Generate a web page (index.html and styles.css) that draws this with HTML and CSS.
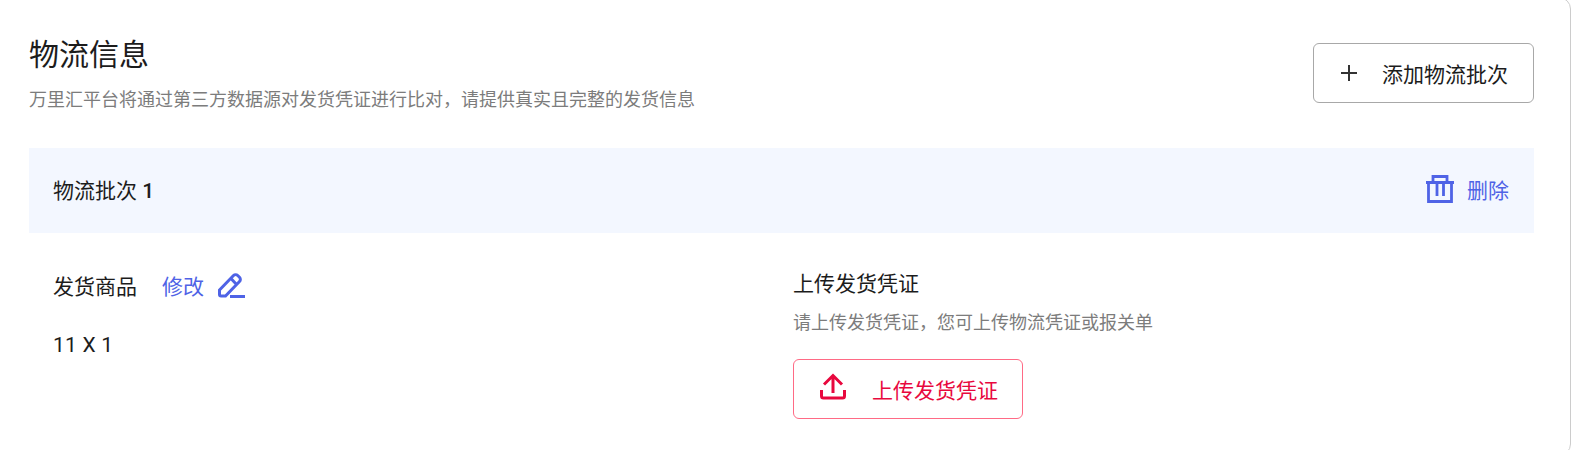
FILE: index.html
```html
<!DOCTYPE html>
<html lang="zh-CN">
<head>
<meta charset="utf-8">
<title>物流信息</title>
<link rel="stylesheet" href="styles.css">
</head>
<body>
<section class="card">
  <header class="head">
    <div>
      <h1 class="title">物流信息</h1>
      <p class="sub">万里汇平台将通过第三方数据源对发货凭证进行比对，请提供真实且完整的发货信息</p>
    </div>
    <button class="btn add">
      <svg class="ico-plus" viewBox="0 0 18 18"><path d="M9 1v16M1 9h16" fill="none" stroke="#333" stroke-width="2"/></svg>
      <span>添加物流批次</span>
    </button>
  </header>
  <div class="batch-bar">
    <span class="batch-name">物流批次 <span class="num">1</span></span>
    <span class="link del">
      <svg class="ico-trash" viewBox="0 0 28 28"><path d="M0 7.500h28M7 7V1.500h14V7M2.500 8v18.500h23V8M11 8v13M17.500 8v13" fill="none" stroke="#4f63e6" stroke-width="2.800"/></svg>
      <span>删除</span>
    </span>
  </div>
  <div class="body">
    <div class="col-l">
      <div class="goods-head">
        <span>发货商品</span>
        <span class="link edit">修改
          <svg class="ico-pen" viewBox="0 0 28 26"><path d="M2.500 18 16.500 3.500a3 3 0 0 1 4.200 0l1.800 1.800a3 3 0 0 1 0 4.200L8.500 24H4A1.500 1.500 0 0 1 2.500 22.500ZM14 6.500l6 6.500M13 24.500h15" fill="none" stroke="#4f63e6" stroke-width="3"/></svg>
        </span>
      </div>
      <div class="goods">11 X 1</div>
    </div>
    <div class="col-r">
      <div class="up-title">上传发货凭证</div>
      <div class="up-sub">请上传发货凭证，您可上传物流凭证或报关单</div>
      <button class="btn upload">
        <svg class="ico-up" viewBox="0 0 28 27"><path d="M14 20V3M5 11.500l9-9 9 9M2.500 17v6a2 2 0 0 0 2 2h19a2 2 0 0 0 2-2v-6" fill="none" stroke="#e8083e" stroke-width="3"/></svg>
        <span>上传发货凭证</span>
      </button>
    </div>
  </div>
</section>
</body>
</html>
```

FILE: styles.css
```css
html, body { margin: 0; padding: 0; background: #fff; height: 450px; overflow: hidden; }
body { font-family: Roboto, "Noto Sans CJK SC", "Noto Sans", sans-serif; color: #1c1c1c; }
.card {
  box-sizing: border-box;
  width: 1591px;
  height: 459px;
  margin: -3px 0 0 -20px;
  padding: 3px 36px 0 48px;
  border: 1px solid #ccc;
  border-radius: 12px;
  background: #fff;
}
.head { display: flex; justify-content: space-between; padding-top: 35px; height: 147px; box-sizing: border-box; }
.title { margin: 0; font-size: 30px; font-weight: 400; line-height: 38px; }
.sub { margin: 13px 0 0; font-size: 18px; line-height: 26px; color: #7c7c7c; }
.btn { display: flex; align-items: center; background: #fff; font-family: inherit; cursor: pointer; box-sizing: border-box; border-radius: 6px; padding: 0; }
.add { width: 221px; height: 60px; margin-top: 7px; border: 1px solid #a8a8a8; font-size: 21px; color: #1c1c1c; padding-left: 26px; }
.ico-plus { width: 18px; height: 18px; margin-right: 24px; }
.batch-bar { display: flex; justify-content: space-between; align-items: center; height: 85px; padding: 0 25px 0 24px; background: #f3f7ff; font-size: 21px; line-height: 30px; }
.num { font-weight: 500; }
.link { color: #4f63e6; }
.del { display: flex; align-items: center; }
.ico-trash { width: 28px; height: 28px; margin-right: 13px; margin-top: -3px; }
.body { display: flex; padding: 36px 24px 0; }
.col-l { width: 740px; }
.goods-head { display: flex; align-items: center; font-size: 21px; line-height: 36px; }
.edit { display: flex; align-items: center; margin-left: 25px; }
.ico-pen { width: 28px; height: 26px; margin-left: 13px; margin-top: -5px; }
.goods { margin-top: 25px; font-size: 21px; line-height: 30px; letter-spacing: 0.2px; }
.up-title { font-size: 21px; line-height: 32px; margin-top: -1px; }
.up-sub { font-size: 18px; line-height: 26px; margin-top: 10px; color: #7c7c7c; }
.upload { width: 230px; height: 60px; margin-top: 23px; border: 1px solid #ff6a85; color: #e8083e; font-size: 21px; padding-left: 25px; }
.ico-up { width: 28px; height: 27px; margin-right: 25px; margin-top: -6px; }
```
